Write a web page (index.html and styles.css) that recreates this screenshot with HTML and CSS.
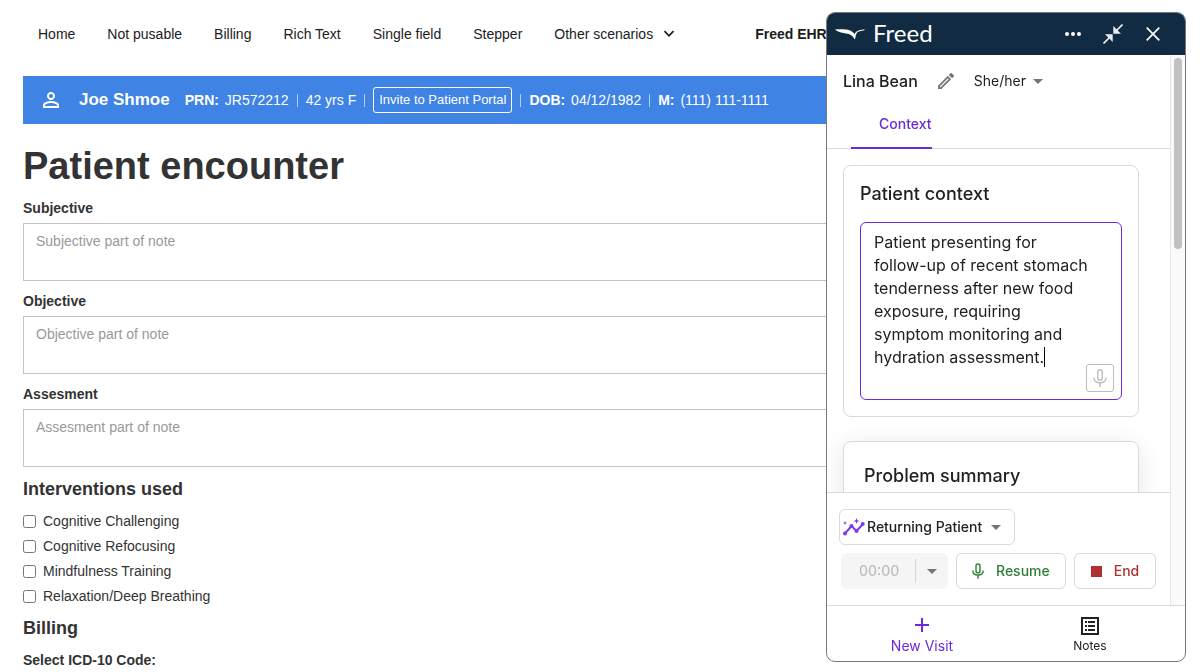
FILE: index.html
```html
<!DOCTYPE html>
<html lang="en">
<head>
  <meta charset="UTF-8">
  <meta name="viewport" content="width=device-width, initial-scale=1.0">
  <title>Freed EHR</title>
  <link rel="stylesheet" href="styles.css">
</head>
<body>
  <div class="page">
    <nav class="topnav">
      <a href="#">Home</a>
      <a href="#">Not pusable</a>
      <a href="#">Billing</a>
      <a href="#">Rich Text</a>
      <a href="#">Single field</a>
      <a href="#">Stepper</a>
      <button class="nav-menu">Other scenarios
        <svg width="12" height="8" viewBox="0 0 12 8"><path d="M1.5 1.2 6 5.8l4.500-4.600" fill="none" stroke="#222" stroke-width="1.800"/></svg>
      </button>
      <strong class="site-name">Freed EHR</strong>
    </nav>

    <div class="patient-bar">
      <svg class="person" width="16" height="16" viewBox="4 4 16 16" fill="#fff"><path d="M12 5.900a2.100 2.100 0 1 1 0 4.200 2.100 2.100 0 0 1 0-4.200m0 9c2.970 0 6.100 1.460 6.100 2.100v1.100H5.900V17c0-.640 3.130-2.100 6.100-2.100M12 4C9.790 4 8 5.790 8 8s1.790 4 4 4 4-1.790 4-4-1.790-4-4-4m0 9c-2.670 0-8 1.340-8 4v3h16v-3c0-2.660-5.330-4-8-4"/></svg>
      <strong class="patient-name">Joe Shmoe</strong>
      <span><b>PRN:</b>&nbsp;JR572212</span>
      <i></i>
      <span>42 yrs F</span>
      <i></i>
      <button class="invite">Invite to Patient Portal</button>
      <i></i>
      <span><b>DOB:</b>&nbsp;04/12/1982</span>
      <i></i>
      <span><b>M:</b>&nbsp;(111) 111-1111</span>
    </div>

    <main>
      <h1>Patient encounter</h1>
      <div class="field">
        <label for="subjective">Subjective</label>
        <textarea id="subjective" placeholder="Subjective part of note"></textarea>
      </div>
      <div class="field">
        <label for="objective">Objective</label>
        <textarea id="objective" placeholder="Objective part of note"></textarea>
      </div>
      <div class="field">
        <label for="assesment">Assesment</label>
        <textarea id="assesment" placeholder="Assesment part of note"></textarea>
      </div>

      <h2>Interventions used</h2>
      <div class="checks">
        <label><input type="checkbox">Cognitive Challenging</label>
        <label><input type="checkbox">Cognitive Refocusing</label>
        <label><input type="checkbox">Mindfulness Training</label>
        <label><input type="checkbox">Relaxation/Deep Breathing</label>
      </div>

      <h2>Billing</h2>
      <h3>Select ICD-10 Code:</h3>
    </main>
  </div>

  <aside class="panel">
    <header class="panel-head">
      <svg class="bird" width="30" height="11" viewBox="0 0 30 11" fill="#fff"><path d="M0 .5c5-.5 11-.6 14.500.7 2.400.9 4.100 2.300 4.900 4C20.600 2.600 23.500.6 30 .5c-.8 1-2.400 1.300-4.400 1.600-2.400.4-3.600 1.200-4.300 3-.6 1.500-.9 3.300-1.300 5.400-1.500-1.900-3.200-4.500-6.200-5.400C10 3.900 4 4.200 0 .5z"/></svg>
      <span class="brand">Freed</span>
      <button aria-label="More"><svg width="18" height="18" viewBox="0 0 18 18" fill="#fff"><circle cx="3" cy="9" r="2"/><circle cx="9" cy="9" r="2"/><circle cx="15" cy="9" r="2"/></svg></button>
      <button aria-label="Shrink"><svg width="20" height="20" viewBox="0 0 20 20" fill="#e9edf1"><path d="M19.500.5 12 8M.5 19.500 8 12" stroke="#e9edf1" stroke-width="1.700"/><path d="M10.300 9.700V2l7.700 7.700zM9.700 10.300H2L9.700 18z"/></svg></button>
      <button aria-label="Close"><svg width="14" height="14" viewBox="0 0 14 14"><path d="M.7.7l12.600 12.600M13.300.7.7 13.300" stroke="#fff" stroke-width="1.700"/></svg></button>
    </header>

    <div class="panel-main">
      <div class="panel-col">
        <div class="visit-head">
          <span class="visit-name">Lina Bean</span>
          <button class="edit" aria-label="Edit name"><svg width="16" height="16" viewBox="3 3 18 18" fill="#757575"><path d="m14.060 9.020.920.920L5.920 19H5v-.920zM17.660 3c-.250 0-.510.100-.700.290l-1.830 1.830 3.750 3.750 1.830-1.830c.390-.390.390-1.020 0-1.410l-2.340-2.340c-.200-.200-.450-.290-.710-.290m-3.600 3.190L3 17.250V21h3.750L17.810 9.940z"/></svg></button>
          <button class="pronouns">She/her <span class="caret"></span></button>
        </div>
        <div class="tabs"><a href="#" class="tab">Context</a></div>

        <div class="scroll">
          <section class="card">
            <label class="card-title" for="context">Patient context</label>
            <div class="context-box">
              <textarea id="context">Patient presenting for
follow-up of recent stomach
tenderness after new food
exposure, requiring
symptom monitoring and
hydration assessment.</textarea>
              <span class="text-cursor"></span>
              <button class="mic" aria-label="Dictate"><svg width="14" height="18" viewBox="0 0 14 18" fill="none" stroke="#bdbdbd" stroke-width="1.400"><rect x="4.700" y=".7" width="4.600" height="10.600" rx="2.300"/><path d="M1 8.500c0 3.400 2.600 5.300 6 5.300s6-1.900 6-5.300M7 13.800V18"/></svg></button>
            </div>
          </section>
          <section class="card summary">
            <h4 class="card-title">Problem summary</h4>
          </section>
        </div>

        <div class="controls">
          <button class="template">
            <svg width="22" height="18" viewBox="0 0 22 18" fill="#7c3aed"><path d="M2 15.500 8.500 8l5 5L20 6" fill="none" stroke="#7c3aed" stroke-width="2"/><circle cx="2" cy="15.500" r="2"/><circle cx="8.500" cy="8" r="2"/><circle cx="13.500" cy="13" r="2"/><circle cx="19.700" cy="6" r="2"/><path d="M13.500 0l.8 2.200 2.200.8-2.200.8-.8 2.200-.8-2.200-2.200-.8 2.200-.8zM2 3l.6 1.400L4 5l-1.400.6L2 7l-.6-1.400L0 5l1.400-.6z"/></svg>
            Returning Patient <span class="caret"></span>
          </button>
          <div class="record">
            <div class="timer">
              <span class="time">00:00</span>
              <button aria-label="Timer options"><span class="caret"></span></button>
            </div>
            <button class="resume"><svg width="12" height="16" viewBox="0 0 14 18" fill="none" stroke="#2e7d32" stroke-width="1.600"><rect x="4.700" y=".8" width="4.600" height="10.400" rx="2.300"/><path d="M1 8.500c0 3.400 2.600 5.300 6 5.300s6-1.900 6-5.300M7 13.800V18"/></svg>Resume</button>
            <button class="end"><span class="stop"></span>End</button>
          </div>
        </div>
      </div>
      <div class="track"><div class="thumb"></div></div>
    </div>

    <nav class="panel-nav">
      <a href="#" class="current">
        <svg width="20" height="20" viewBox="0 0 20 20"><path d="M10 3v14M3 10h14" stroke="#6b2bd9" stroke-width="2"/></svg>
        New Visit
      </a>
      <a href="#">
        <svg width="20" height="20" viewBox="0 0 20 20" fill="#222"><path d="M1 1h18v18H1zm2 2v14h14V3z" fill-rule="evenodd"/><path d="M5 5h2v2H5zm3 0h7v2H8zM5 9h2v2H5zm3 0h7v2H8zm-3 4h2v2H5zm3 0h7v2H8z"/></svg>
        Notes
      </a>
    </nav>
  </aside>
</body>
</html>
```
FILE: styles.css
```css
* { box-sizing: border-box; }
body {
  margin: 0;
  font-family: "Liberation Sans", Arial, sans-serif;
  font-size: 14px;
  line-height: 20px;
  color: #333;
  background: #fff;
}
button {
  font: inherit;
  color: inherit;
  background: none;
  border: none;
  padding: 0;
}
a { color: inherit; text-decoration: none; }
svg { flex: none; display: block; }

.page { padding: 0 23px; }

/* top navigation */
.topnav {
  display: flex;
  align-items: center;
  gap: 32px;
  height: 68px;
  padding-left: 15px;
  color: #1c1c1e;
  white-space: nowrap;
}
.nav-menu {
  display: flex;
  align-items: center;
  gap: 10px;
}
.site-name { margin-left: 48px; }

/* patient bar */
.patient-bar {
  display: flex;
  align-items: center;
  gap: 8px;
  height: 48px;
  margin-top: 8px;
  padding-left: 20px;
  background: #3f83e4;
  color: #fff;
  white-space: nowrap;
}
.patient-bar .person { margin-right: 12px; }
.patient-bar b { margin-right: 2px; }
.patient-name { font-size: 17px; margin-right: 7px; }
.patient-bar i {
  width: 1px;
  height: 13px;
  background: #b5d0f5;
}
.invite {
  height: 26px;
  padding: 0 5px;
  border: 1px solid #fff;
  border-radius: 3px;
  font-size: 13px;
}

/* note form */
h1 {
  margin: 18px 0 8px;
  font-size: 38px;
  line-height: 48px;
}
.field { margin-bottom: 10px; }
.field label {
  display: block;
  font-weight: bold;
  line-height: 20px;
  margin-bottom: 5px;
}
.field textarea {
  display: block;
  width: 100%;
  height: 58px;
  padding: 7px 12px;
  border: 1px solid #c4c4c4;
  font: inherit;
  resize: none;
}
.field textarea::placeholder { color: #999; }
h2 {
  margin: 0;
  font-size: 18px;
  line-height: 24px;
}
h3 {
  margin: 10px 0 0;
  font-size: 14px;
  line-height: 20px;
}
.checks {
  display: grid;
  margin: 7px 0 8px;
}
.checks label {
  display: flex;
  align-items: center;
  gap: 7px;
  height: 25px;
}
.checks input { width: 13px; height: 13px; margin: 2px 0 0; }

/* floating Freed panel */
.panel {
  position: fixed;
  top: 12px;
  right: 18px;
  bottom: 10px;
  width: 360px;
  display: flex;
  flex-direction: column;
  overflow: hidden;
  background: #fff;
  border: 1px solid #77797c;
  border-radius: 9px;
  font-family: Inter, sans-serif;
  color: #212121;
}
.panel-head {
  display: flex;
  align-items: center;
  gap: 20px;
  height: 42px;
  padding: 0 22px 0 8px;
  background: #112b42;
  color: #fff;
}
.brand {
  flex: 1;
  margin-left: -12px;
  padding-bottom: 2px;
  font-family: Lato, sans-serif;
  font-size: 24px;
}
.panel-head button {
  display: grid;
  place-items: center;
  width: 20px;
  height: 20px;
}
.panel-main {
  flex: 1;
  min-height: 0;
  display: flex;
}
.panel-col {
  flex: 1;
  min-width: 0;
  display: flex;
  flex-direction: column;
}
.track {
  width: 15px;
  padding: 3px;
  background: #fafafa;
  border-left: 1px solid #e6e6e6;
}
.thumb {
  width: 8px;
  height: 191px;
  border-radius: 4px;
  background: #c1c1c1;
}
.caret {
  border: 5px solid transparent;
  border-top-color: #757575;
  border-bottom: none;
}

.visit-head {
  display: flex;
  align-items: center;
  height: 52px;
  padding-left: 16px;
}
.visit-name { font-size: 16px; font-weight: 500; }
.edit { margin: 0 20px; }
.pronouns {
  display: flex;
  align-items: center;
  gap: 7px;
}
.tabs {
  height: 42px;
  padding-left: 24px;
  border-bottom: 1px solid #dadada;
}
.tab {
  display: inline-block;
  height: 42px;
  padding: 7px 0 0 28px;
  border-bottom: 2px solid #6b2bd9;
  color: #6b2bd9;
  font-weight: 500;
}

.scroll {
  flex: 1;
  min-height: 0;
  overflow: hidden;
  padding: 16px 31px 0 16px;
}
.card {
  padding: 16px;
  border: 1px solid #dadada;
  border-radius: 8px;
  background: #fff;
}
.card-title {
  display: block;
  margin: 0;
  font-size: 18px;
  line-height: 24px;
  font-weight: 500;
}
.context-box { position: relative; margin-top: 16px; }
.context-box textarea {
  display: block;
  width: 100%;
  height: 178px;
  padding: 8px 13px;
  border: 1px solid #6b2bd9;
  border-radius: 6px;
  font: 16px/23px Inter, sans-serif;
  color: #212121;
  outline: none;
  resize: none;
}
.text-cursor {
  position: absolute;
  left: 184px;
  top: 125px;
  width: 1px;
  height: 20px;
  background: #000;
}
.mic {
  position: absolute;
  right: 8px;
  bottom: 8px;
  width: 28px;
  height: 28px;
  display: grid;
  place-items: center;
  border: 1px solid #bdbdbd;
  border-radius: 3px;
}
.summary {
  height: 160px;
  margin-top: 24px;
  padding: 22px 20px;
  box-shadow: 0 4px 24px rgba(0, 0, 0, 0.1);
}

.controls {
  position: relative;
  padding: 16px 12px;
  border-top: 1px solid #dadada;
  background: #fff;
}
.template,
.resume,
.end {
  display: flex;
  align-items: center;
  height: 36px;
  border: 1px solid #dadada;
  border-radius: 6px;
  font-weight: 500;
}
.template { gap: 2px; padding: 0 13px 0 3px; }
.template .caret { margin-left: 7px; }
.record {
  display: flex;
  gap: 8px;
  margin: 8px 0 0 2px;
}
.timer {
  display: flex;
  align-items: center;
  width: 107px;
  border-radius: 6px;
  background: #f5f5f5;
}
.time {
  flex: 1;
  padding-left: 18px;
  color: #bdbdbd;
  font-weight: 500;
}
.timer button {
  display: grid;
  place-items: center;
  width: 33px;
  height: 24px;
  border-left: 1px solid #d6d6d6;
}
.resume { gap: 12px; padding: 0 15px; color: #2e7d32; }
.end { gap: 12px; padding: 0 16px; color: #b03030; }
.stop {
  width: 11px;
  height: 11px;
  background: #b03030;
}

.panel-nav {
  display: flex;
  height: 56px;
  padding: 0 11px;
  border-top: 1px solid #dadada;
}
.panel-nav a {
  flex: 1;
  display: flex;
  flex-direction: column;
  align-items: center;
  padding-top: 10px;
  font-size: 12px;
}
.panel-nav .current {
  padding-top: 9px;
  gap: 1px;
  font-size: 14px;
  color: #6b2bd9;
}
```
